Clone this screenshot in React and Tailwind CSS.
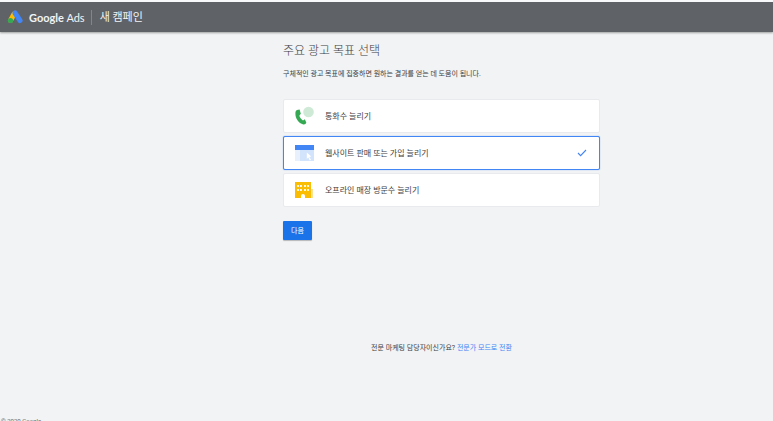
import { useState } from 'react';
import clsx from 'clsx';

function AdsLogo() {
  return (
    <svg className="h-4 w-4" viewBox="0 0 32 32" fill="none" aria-hidden="true">
      <path d="M14 10L7 23" stroke="#fbbc04" strokeWidth="10" strokeLinecap="round" />
      <path d="M16 8L26 23" stroke="#4285f4" strokeWidth="10" strokeLinecap="round" />
      <circle cx="7" cy="23" r="5.2" fill="#34a853" />
    </svg>
  );
}

function CallIcon() {
  return (
    <svg className="h-5 w-5" viewBox="0 0 20 20" aria-hidden="true">
      <circle cx="13.5" cy="6" r="5.3" fill="#ceead6" />
      <path
        d="M2 3.9L4.6 3.6L5.8 7.8L4.3 9.7C5.1 11.8 6.3 13.3 8 14.5L9.8 13.3L11.3 16.6C10.9 18 9.9 18.6 8.3 18.4C3.6 17.3 0.2 12.3 0.4 7.2C0.4 5.4 0.9 4.4 2 3.9Z"
        fill="#34a853"
      />
    </svg>
  );
}

function WebsiteIcon() {
  return (
    <svg className="h-5 w-5" viewBox="0 0 20 20" aria-hidden="true">
      <path d="M0 2h19v5h-19z" fill="#4285f4" />
      <path d="M0 7h5v11h-5z" fill="#e8f0fe" />
      <path d="M5 7h14v11h-14z" fill="#d2e3fc" />
      <path d="M11.8 9.5L16.3 13.6L14.3 13.9L16 16.8L14.8 17.4L13.3 14.6L11.8 16Z" fill="#fff" />
    </svg>
  );
}

function StoreIcon() {
  return (
    <svg className="h-5 w-5" viewBox="0 0 20 20" aria-hidden="true">
      <path d="M15 9h3v9h-3z" fill="#fde293" />
      <path d="M0 2h16v16h-6v-2a2 2 0 0 0-4 0v2h-6z" fill="#fbbc04" />
      <path
        d="M2 5h2v2h-2zM5 5h2v2h-2zM9 5h2v2h-2zM12 5h2v2h-2zM2 9h2v2h-2zM5 9h2v2h-2zM9 9h2v2h-2zM12 9h2v2h-2z"
        fill="#fef7e0"
      />
    </svg>
  );
}

const GOALS = [
  { id: 'calls', label: '통화수 늘리기', Icon: CallIcon },
  { id: 'website', label: '웹사이트 판매 또는 가입 늘리기', Icon: WebsiteIcon },
  { id: 'store', label: '오프라인 매장 방문수 늘리기', Icon: StoreIcon },
];

function GoalCard({ goal, checked, onSelect }) {
  const { id, label, Icon } = goal;
  return (
    <label
      className={clsx(
        'relative flex h-[34px] cursor-pointer items-center rounded-xs border bg-white pr-3 pl-[11px]',
        checked ? 'border-[#4285f4] shadow-[0_0_1px_#4285f4]' : 'border-[#e8eaed]'
      )}
    >
      <input
        type="radio"
        name="goal"
        value={id}
        checked={checked}
        onChange={() => onSelect(id)}
        className="sr-only"
      />
      <Icon />
      <span className="ml-[10px] flex-1 pt-0.5 text-[8px] leading-3 text-[#3c4043]">{label}</span>
      {checked && (
        <svg className="h-2.5 w-2.5" viewBox="0 0 10 10" fill="none" aria-hidden="true">
          <path d="M1 5L3.6 7.6L9 2" stroke="#4285f4" strokeWidth="1.1" />
        </svg>
      )}
    </label>
  );
}

export default function App() {
  const [goal, setGoal] = useState('website');

  return (
    <div className="flex h-screen flex-col overflow-hidden bg-[#f1f3f4] font-['Roboto','Noto_Sans_CJK_KR',sans-serif]">
      <header className="flex h-8 shrink-0 items-center border-t-2 border-[#f8f9fa] bg-[#5f6368] pl-[7px] text-[#f1f3f4] shadow-[0_1px_2px_rgba(0,0,0,0.35)]">
        <AdsLogo />
        <span className="ml-[6px] pt-px font-['Lato',sans-serif] text-[11px] leading-4">
          <span className="font-bold">Google</span> Ads
        </span>
        <span className="mr-2 ml-[6px] h-[15px] border-l border-[#80868b]" />
        <span className="pt-px text-[11px] leading-4">새 캠페인</span>
      </header>

      <main className="ml-[283px] w-full max-w-[317px] flex-1 pt-[11px]">
        <h1 className="text-[12px] leading-4 font-light text-[#3c4043]">주요 광고 목표 선택</h1>
        <p className="mt-[10px] text-[7px] leading-[10px] whitespace-nowrap text-[#3c4043]">
          구체적인 광고 목표에 집중하면 원하는 결과를 얻는 데 도움이 됩니다.
        </p>

        <div role="radiogroup" aria-label="주요 광고 목표 선택" className="mt-5 flex flex-col gap-[3px]">
          {GOALS.map((item) => (
            <GoalCard key={item.id} goal={item} checked={item.id === goal} onSelect={setGoal} />
          ))}
        </div>

        <button
          type="button"
          className="mt-[14px] block h-[19px] rounded-[1px] bg-[#1a73e8] px-2 text-[7px] leading-3 text-white shadow-[0_1px_1px_rgba(0,0,0,0.25)]"
        >
          다음
        </button>

        <p className="mt-[103px] text-center text-[7px] leading-[10px] text-[#3c4043]">
          전문 마케팅 담당자이신가요?{' '}
          <a href="#expert" className="text-[#4285f4]">
            전문가 모드로 전환
          </a>
        </p>
      </main>

      <footer className="h-1 shrink-0 pl-px text-[6px] leading-2 text-[#5f6368]">© 2020 Google</footer>
    </div>
  );
}
